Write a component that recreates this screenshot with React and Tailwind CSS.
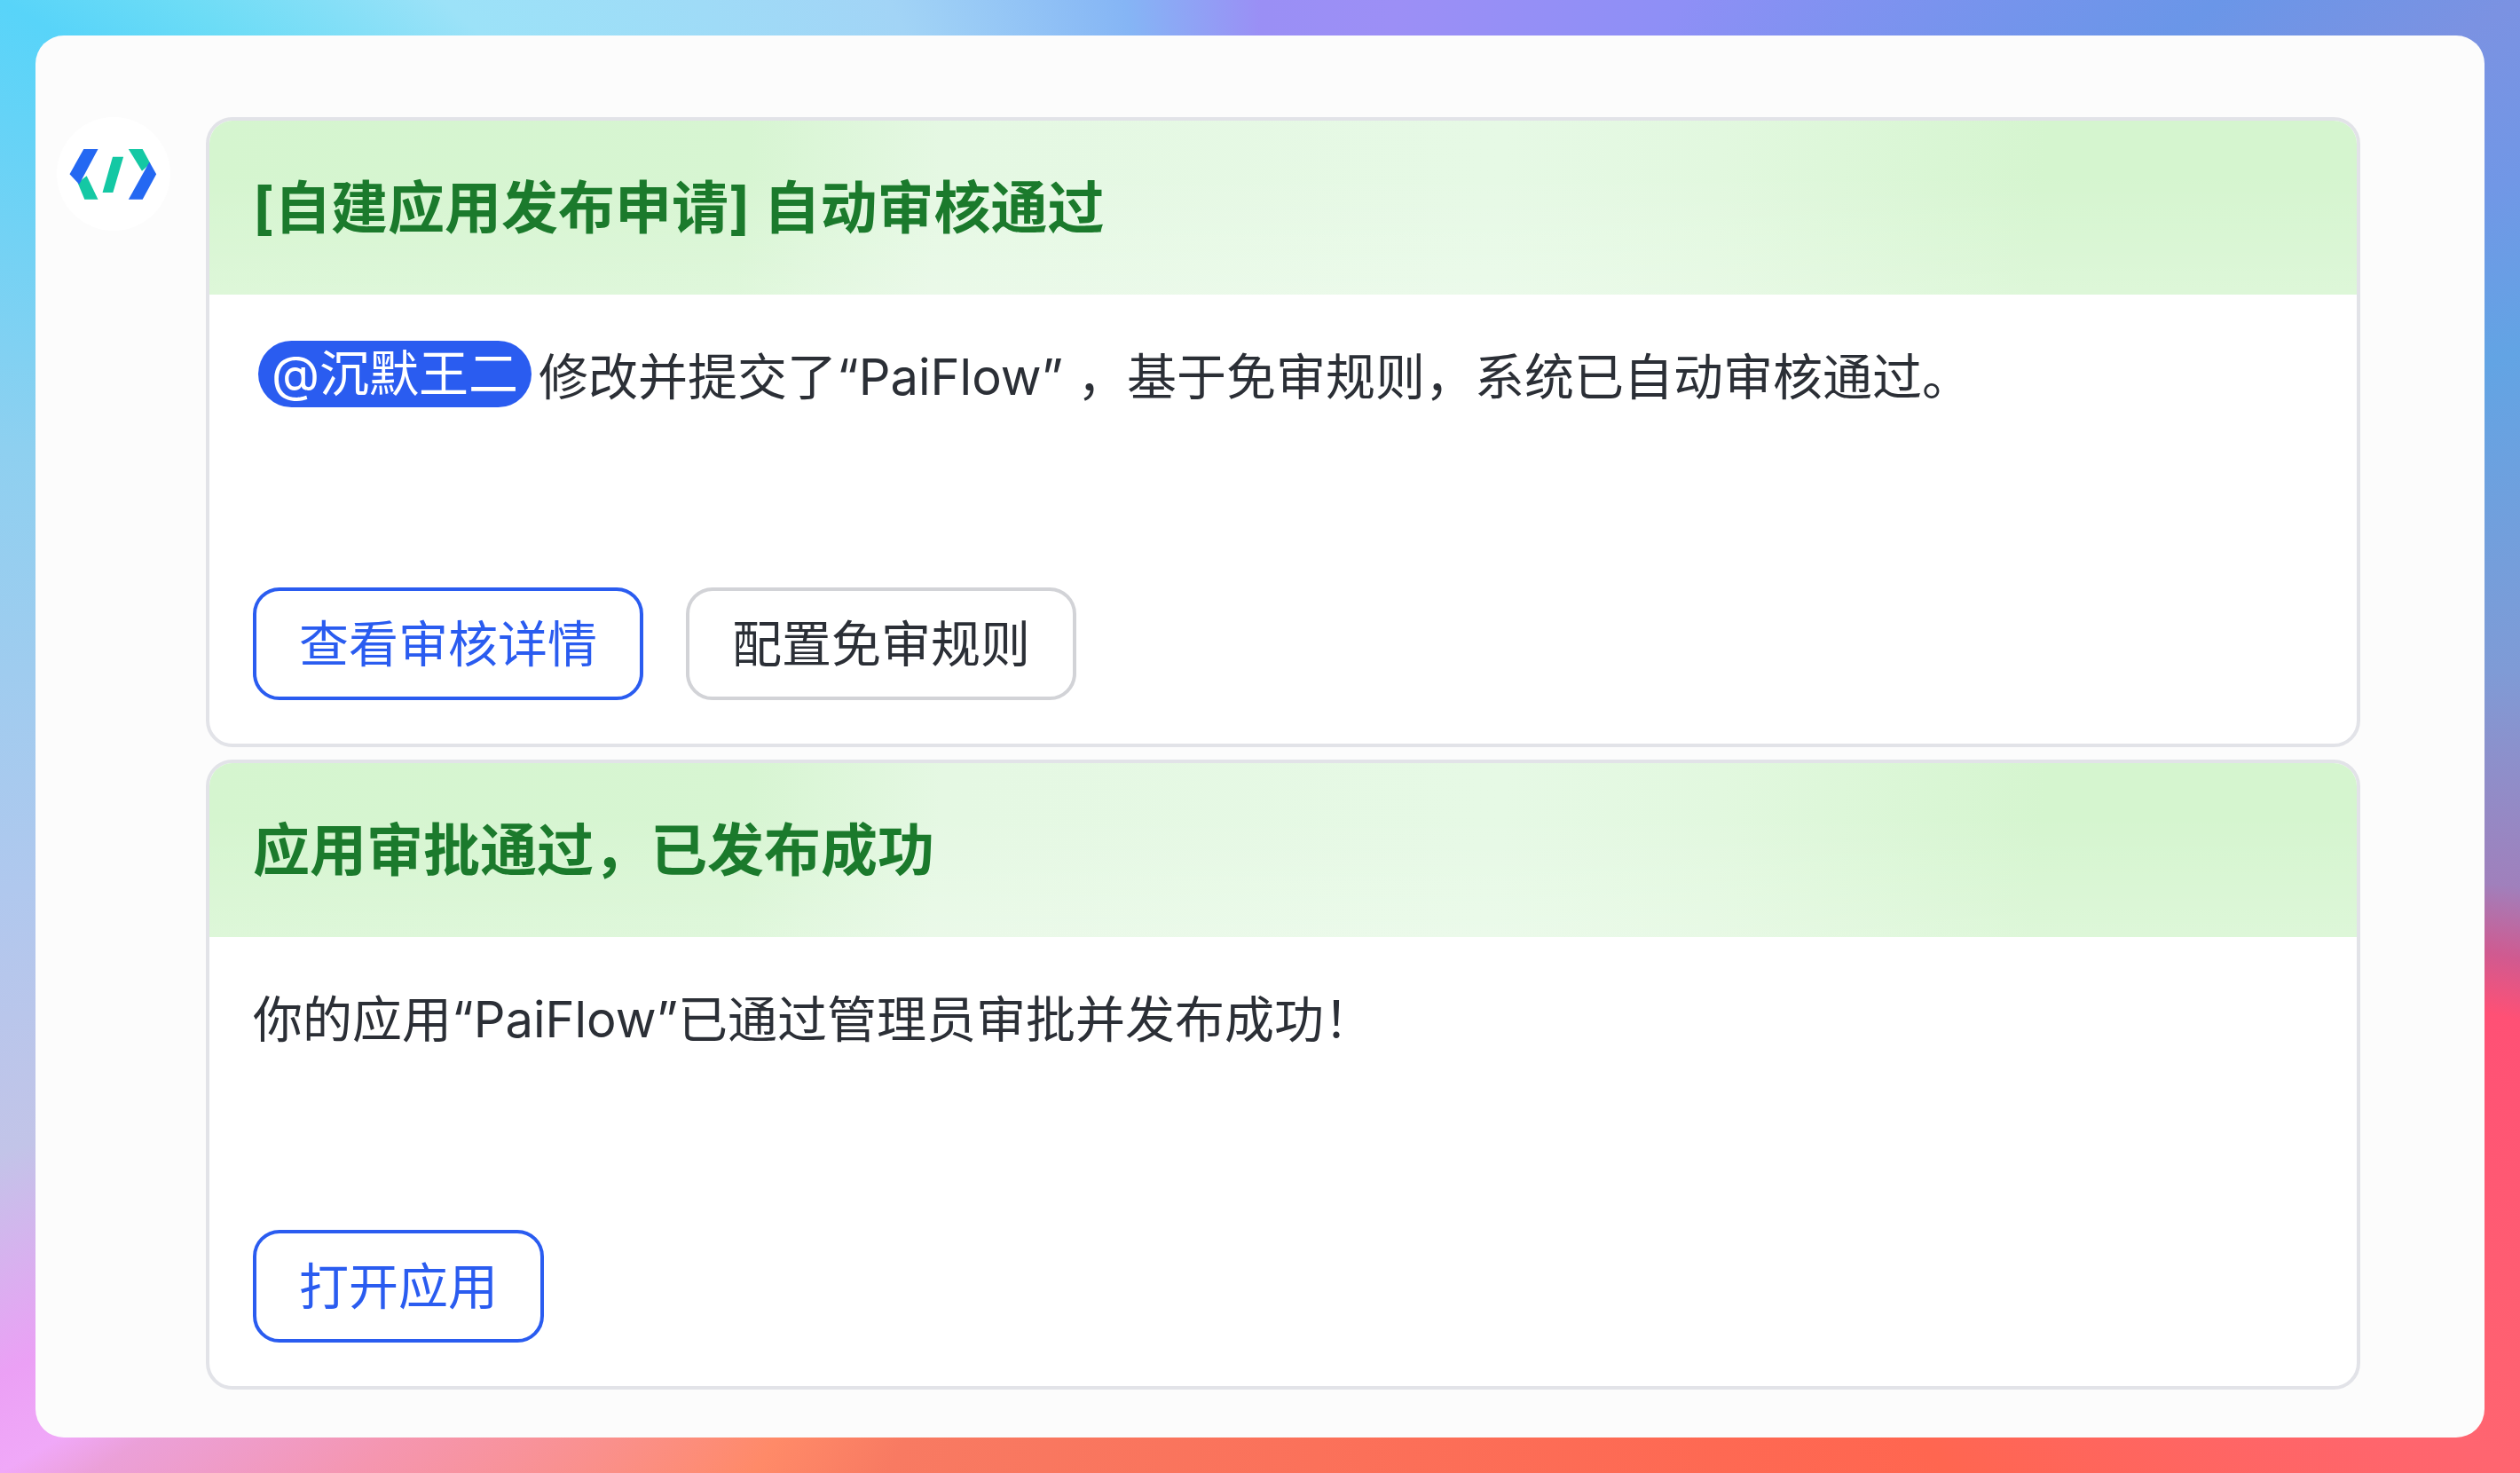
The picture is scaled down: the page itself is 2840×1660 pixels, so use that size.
const Logo = () => (
  <div className="w-[128px] h-[128px] flex-shrink-0 rounded-full bg-white">
    <svg viewBox="75 65 380 380" className="w-full h-full">
      <path fill="#14c8a4" d="M145 285L175 262L213 340H168Z" />
      <path fill="#2468f2" d="M118 256L165 172H213L150 290Z" />
      <path fill="#14c8a4" d="M262 198H298L263 317H228Z" />
      <path fill="#14c8a4" d="M315 172H362L388 220L360 245Z" />
      <path fill="#2468f2" d="M408 256L362 340H315L385 215Z" />
    </svg>
  </div>
);

const Button = ({ primary, children }) => (
  <button
    className={
      primary
        ? "h-[127px] px-[48px] bg-white border-4 border-[#2a5cf0] rounded-[30px] text-[#2a5cf0] text-[56px]"
        : "h-[127px] px-[48px] bg-white border-4 border-[#d2d3d7] rounded-[30px] text-[#2b2f36] text-[56px]"
    }
  >
    {children}
  </button>
);

const Card = ({ title, children, actions }) => (
  <div className="h-[710px] flex flex-col bg-white border-4 border-[#e2e3e8] rounded-[30px] overflow-hidden">
    <div className="h-[196px] flex-shrink-0 flex items-center px-[49px] bg-[linear-gradient(180deg,transparent_30%,rgba(255,255,255,0.2)_100%),linear-gradient(95deg,#d5f5cf_0%,#d7f5d2_25%,#e5f8e3_34%,#e6f9e5_60%,#e2f8df_70%,#d5f5cf_85%,#d5f5cf_100%)]">
      <h2 className="text-[64px] font-bold text-[#1b7a2c]">{title}</h2>
    </div>
    <div className="flex-1 flex flex-col justify-between px-[49px] pt-[56px] pb-[49px]">
      <div className="text-[56px] leading-[75px] text-[#2b2f36]">{children}</div>
      <div className="flex gap-[48px]">{actions}</div>
    </div>
  </div>
);

export default function App() {
  return (
    <div className="w-[2840px] h-[1660px] p-[40px] font-['Inter','Noto_Sans_CJK_SC',sans-serif] bg-[conic-gradient(from_0deg_at_50%_50%,#9a8ff5_0deg,#9c8ff6_10.6deg,#8e8ff6_30deg,#6a96e8_52.5deg,#7b92e2_59.7deg,#7197e6_66deg,#62a4e4_73deg,#7f9bd6_87deg,#a080bc_96.8deg,#d05a90_100deg,#ff5075_102.7deg,#ff6570_120.3deg,#ff6650_136.8deg,#f87a62_206.8deg,#ff8a68_214.5deg,#f596b0_230.9deg,#eba0d8_237.8deg,#f0a8f8_239.7deg,#eba0f5_243.1deg,#c2c4e8_251.7deg,#b0c8ee_263deg,#8ed0f0_283deg,#58d4f9_300.3deg,#6cdcf6_304.2deg,#9ce2f8_312deg,#a2d4f6_333.2deg,#85b5f5_349.6deg,#9a8ff5_360deg)]">
      <div className="h-full flex gap-[40px] pl-[24px] pt-[92px] bg-[#fcfcfc] rounded-[32px]">
        <Logo />
        <div className="w-[2428px] flex flex-col gap-[14px]">
          <Card
            title="[自建应用发布申请] 自动审核通过"
            actions={
              <>
                <Button primary>查看审核详情</Button>
                <Button>配置免审规则</Button>
              </>
            }
          >
            <span className="inline-block h-[75px] ml-[6px] mr-[8px] px-[15px] -translate-y-[4px] rounded-full bg-[#2a5cf0] text-white">
              @沉默王二
            </span>
            修改并提交了“PaiFlow” ，基于免审规则，系统已自动审核通过。
          </Card>
          <Card
            title="应用审批通过，已发布成功"
            actions={<Button primary>打开应用</Button>}
          >
            你的应用“PaiFlow”已通过管理员审批并发布成功！
          </Card>
        </div>
      </div>
    </div>
  );
}
